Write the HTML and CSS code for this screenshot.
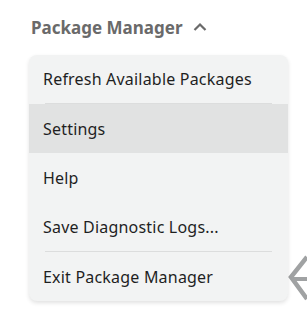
FILE: index.html
```html
<!DOCTYPE html>
<html lang="en">
<head>
    <meta charset="UTF-8">
    <meta name="viewport" content="width=device-width, initial-scale=1.0">
    <title>Package Manager</title>
    <link rel="stylesheet" href="styles.css">
</head>
<body>

    <div class="page">
        <svg class="bg-icon" width="30" height="60" viewBox="0 0 30 60">
            <path d="M28 9 L12 29 L28 51" fill="none" stroke="#a0a2a3" stroke-width="4.5"/>
            <path d="M14 31 H30" fill="none" stroke="#a0a2a3" stroke-width="4"/>
        </svg>

        <div class="toggle">
            <span>Package Manager</span>
            <svg width="14" height="10" viewBox="0 0 14 10">
                <path d="M1.5 8 L7 2.5 L12.5 8" fill="none" stroke="#6a6a6a" stroke-width="2.2"/>
            </svg>
        </div>

        <ul class="menu">
            <li class="item">Refresh Available Packages</li>
            <li class="divider"></li>
            <li class="item active">Settings</li>
            <li class="item">Help</li>
            <li class="item">Save Diagnostic Logs...</li>
            <li class="divider"></li>
            <li class="item">Exit Package Manager</li>
        </ul>
    </div>

</body>
</html>
```

FILE: styles.css
```css
* {
    margin: 0;
    padding: 0;
    box-sizing: border-box;
}

body {
    background: #fff;
    font-family: "Noto Sans", "Open Sans", sans-serif;
    color: #1f1f1f;
}

.page {
    position: relative;
    width: 307px;
    height: 320px;
    overflow: hidden;
    padding: 14px 0 0 29px;
}

.bg-icon {
    position: absolute;
    left: 279px;
    top: 248px;
}

.toggle {
    display: flex;
    align-items: center;
    gap: 10px;
    height: 26px;
    padding-left: 2px;
    font-size: 17px;
    font-weight: 700;
    color: #6a6a6a;
}

.menu {
    position: relative;
    list-style: none;
    width: 259px;
    margin-top: 15px;
    background: #f2f3f3;
    border-radius: 8px;
    box-shadow: 0 2px 4px rgba(0, 0, 0, 0.12);
    overflow: hidden;
}

.item {
    height: 49px;
    display: flex;
    align-items: center;
    padding-left: 14px;
    font-size: 16px;
    letter-spacing: 0.2px;
}

.item:first-child {
    height: 48px;
}

.item.active {
    background: #e1e2e2;
}

.divider {
    height: 1px;
    margin: 0 16px;
    background: #dcdddd;
}
```
